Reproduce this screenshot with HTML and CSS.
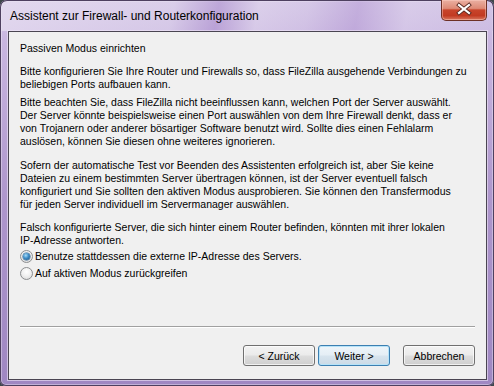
FILE: index.html
```html
<!DOCTYPE html>
<html lang="de">
<head>
    <meta charset="UTF-8">
    <title>Assistent zur Firewall- und Routerkonfiguration</title>
    <link rel="stylesheet" href="styles.css">
</head>
<body>
    <!-- Window -->
    <div class="window">
        <div class="titlebar">
            <span class="title">Assistent zur Firewall- und Routerkonfiguration</span>
            <button class="close-btn" aria-label="Schließen">
                <svg width="46" height="21" viewBox="0 0 46 21">
                    <path d="M18 6 L28 14 M28 6 L18 14" stroke="#5a2a22" stroke-width="4" stroke-linecap="square" fill="none"/>
                    <path d="M18 6 L28 14 M28 6 L18 14" stroke="#fff" stroke-width="2.2" stroke-linecap="square" fill="none"/>
                </svg>
            </button>
        </div>

        <div class="client">
            <!-- Wizard page -->
            <div class="page">
                <p class="heading">Passiven Modus einrichten</p>
                <p class="para p1">Bitte konfigurieren Sie Ihre Router und Firewalls so, dass FileZilla ausgehende Verbindungen zu<br>beliebigen Ports aufbauen kann.</p>
                <p class="para p2">Bitte beachten Sie, dass FileZilla nicht beeinflussen kann, welchen Port der Server auswählt.<br>Der Server könnte beispielsweise einen Port auswählen von dem Ihre Firewall denkt, dass er<br>von Trojanern oder anderer bösartiger Software benutzt wird. Sollte dies einen Fehlalarm<br>auslösen, können Sie diesen ohne weiteres ignorieren.</p>
                <p class="para p3">Sofern der automatische Test vor Beenden des Assistenten erfolgreich ist, aber Sie keine<br>Dateien zu einem bestimmten Server übertragen können, ist der Server eventuell falsch<br>konfiguriert und Sie sollten den aktiven Modus ausprobieren. Sie können den Transfermodus<br>für jeden Server individuell im Servermanager auswählen.</p>
                <p class="para p4">Falsch konfigurierte Server, die sich hinter einem Router befinden, könnten mit ihrer lokalen<br>IP-Adresse antworten.</p>

                <div class="radio-group">
                    <label class="radio"><span class="radio-box checked"></span>Benutze stattdessen die externe IP-Adresse des Servers.</label>
                    <label class="radio"><span class="radio-box"></span>Auf aktiven Modus zurückgreifen</label>
                </div>
            </div>

            <!-- Buttons -->
            <div class="footer">
                <hr class="separator">
                <div class="buttons">
                    <button class="btn">&lt; Zurück</button>
                    <button class="btn default">Weiter &gt;</button>
                    <button class="btn cancel">Abbrechen</button>
                </div>
            </div>
        </div>
    </div>
</body>
</html>
```

FILE: styles.css
```css
/* General */
html, body {
    margin: 0;
    background: #3e474b;
}

body {
    font-family: 'Liberation Sans', Arial, sans-serif;
    color: #000;
}

/* Window frame */
.window {
    width: 494px;
    height: 386px;
    box-sizing: border-box;
    padding: 0 7px 6px 8px;
    display: flex;
    flex-direction: column;
    border-radius: 7px 7px 6px 6px;
    background: linear-gradient(#d6c9e7 0, #c9b6e0 40px, #ae96cc 200px, #9f87c2 100%);
    box-shadow: inset 0 0 0 1px #4e4060, inset 0 0 0 2px rgba(255, 255, 255, 0.35);
    overflow: hidden;
}

.titlebar {
    height: 31px;
    display: flex;
    align-items: flex-start;
    margin: 0 -7px 0 -8px;
    padding: 0 7px 0 10px;
    border-radius: 7px 7px 0 0;
    background: linear-gradient(100deg,
        rgba(232, 224, 242, 0.7) 0%,
        rgba(222, 212, 236, 0.5) 35%,
        rgba(170, 140, 205, 0.55) 44%,
        rgba(225, 215, 238, 0.5) 52%,
        rgba(214, 200, 232, 0.4) 62%,
        rgba(180, 152, 212, 0.5) 72%,
        rgba(220, 208, 236, 0.5) 82%,
        rgba(205, 190, 228, 0.4) 100%);
    box-shadow: inset 0 1px 0 #4e4060, inset 1px 0 0 #4e4060, inset -1px 0 0 #4e4060;
}

.title {
    font-size: 12px;
    line-height: 15px;
    margin-top: 9px;
    color: #000;
}

.close-btn {
    margin-left: auto;
    width: 46px;
    height: 21px;
    padding: 0;
    border: 1px solid #6d3026;
    border-top: none;
    border-radius: 0 0 5px 5px;
    background: linear-gradient(#eab0a2 0%, #de8a76 42%, #c8442b 50%, #c23a22 78%, #d9765e 100%);
    box-shadow: inset 0 0 0 1px rgba(255, 210, 200, 0.45);
}

.close-btn svg {
    display: block;
    margin: -1px 0 0 -1px;
}

/* Client area */
.client {
    flex-grow: 1;
    display: flex;
    flex-direction: column;
    background: #f0f0f0;
    border: 1px solid #4a4552;
    box-shadow: 0 0 0 1px rgba(240, 232, 248, 0.6);
    font-size: 10.5px;
    line-height: 13px;
}

.page {
    padding: 10px 11px 0;
    white-space: nowrap;
}

.page p {
    margin: 0;
}

.heading {
    margin-bottom: 10px !important;
}

.p1 { margin-bottom: 5px !important; }
.p2 { margin-bottom: 11px !important; }
.p3 { margin-bottom: 10px !important; }
.p4 { margin-bottom: 1px !important; }

/* Radio buttons */
.radio {
    display: flex;
    align-items: center;
    gap: 2px;
    height: 16px;
    margin-bottom: 1px;
}

.radio-box {
    position: relative;
    width: 13px;
    height: 13px;
    box-sizing: border-box;
    border: 1px solid #8c8e90;
    border-radius: 50%;
    background: radial-gradient(circle at 50% 35%, #ffffff 0%, #f1f1f1 45%, #d6d6d6 100%);
}

.radio-box.checked::after {
    content: "";
    position: absolute;
    top: 2px;
    left: 2px;
    width: 7px;
    height: 7px;
    border-radius: 50%;
    background: radial-gradient(circle at 40% 35%, #a9dcf8 0%, #3d8cc6 45%, #1a4c7b 100%);
    box-shadow: 0 0 0 0.5px #2a5a86;
}

/* Footer */
.footer {
    margin-top: auto;
    padding: 0 11px 13px;
}

.separator {
    height: 0;
    margin: 0 0 17px;
    border: none;
    border-top: 1px solid #a0a0a0;
    border-bottom: 1px solid #fff;
}

.buttons {
    display: flex;
    justify-content: flex-end;
    gap: 3px;
}

.btn {
    width: 72px;
    height: 21px;
    padding: 0;
    font-family: inherit;
    font-size: 10.5px;
    color: #000;
    border: 1px solid #707070;
    border-radius: 3px;
    background: linear-gradient(#f3f3f3 0%, #ebebeb 48%, #dddddd 52%, #cfcfcf 100%);
    box-shadow: inset 0 0 0 1px rgba(255, 255, 255, 0.7);
}

.btn.default {
    border-color: #3c7fb1;
    background: linear-gradient(#eef5fa 0%, #e5eef5 48%, #d7e4ee 52%, #cbdae6 100%);
    box-shadow: inset 0 0 0 1px #b6e3f9;
}

.btn.cancel {
    margin-left: 10px;
}
```
